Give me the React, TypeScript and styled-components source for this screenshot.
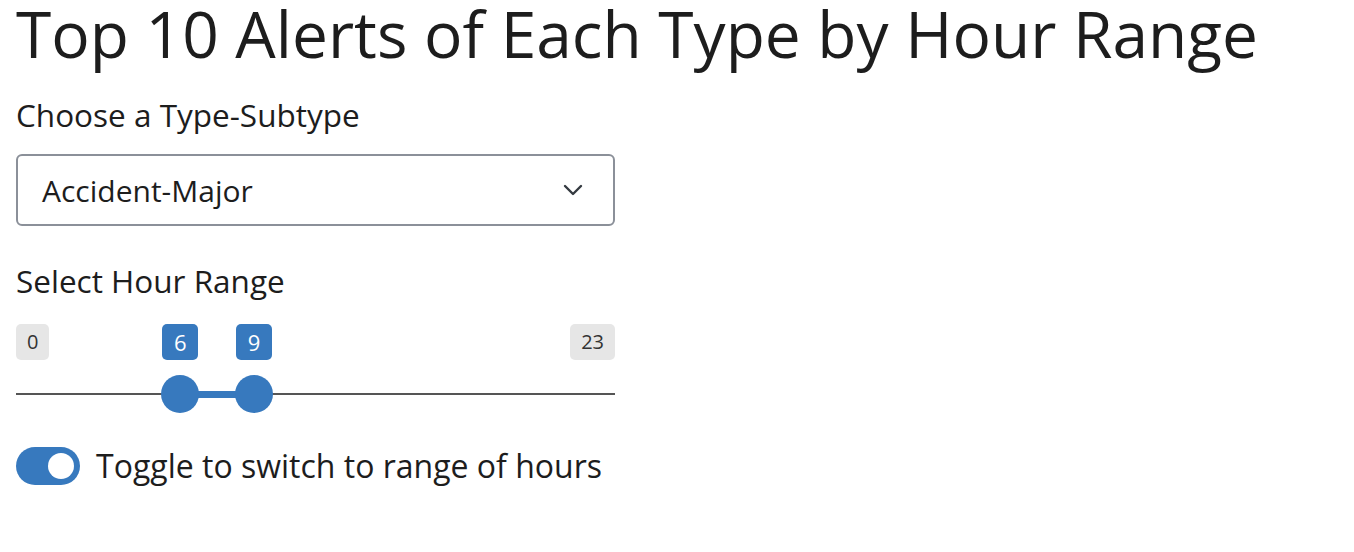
import { createGlobalStyle } from 'styled-components'
import styled from 'styled-components'

const MIN = 0
const MAX = 23
const FROM = 6
const TO = 9
// handle centres run from HANDLE_INSET to width - HANDLE_INSET
const HANDLE_INSET = 17

function pos(v: number) {
	const f = (v - MIN) / (MAX - MIN)
	return `calc(${HANDLE_INSET}px + (100% - ${HANDLE_INSET * 2}px) * ${f})`
}

function App() {
	return (
		<Page>
			<GlobalStyle />
			<Title>Top 10 Alerts of Each Type by Hour Range</Title>
			<Form>
				<Field $top={28}>
					<Label>Choose a Type-Subtype</Label>
					<Select>
						<span>Accident-Major</span>
						<svg width="20" height="12" viewBox="0 0 20 12">
							<path
								d="M2 2l8 8 8-8"
								fill="none"
								stroke="#343a40"
								strokeWidth="2.4"
								strokeLinecap="round"
								strokeLinejoin="round"
							/>
						</svg>
					</Select>
				</Field>
				<Field $top={36}>
					<Label>Select Hour Range</Label>
					<Slider>
						<TagRow>
							<EdgeTag>{MIN}</EdgeTag>
							<ValueTag style={{ left: pos(FROM) }}>{FROM}</ValueTag>
							<ValueTag style={{ left: pos(TO) }}>{TO}</ValueTag>
							<EdgeTag>{MAX}</EdgeTag>
						</TagRow>
						<TrackArea>
							<Line />
							<Bar style={{ left: pos(FROM), right: `calc(100% - ${pos(TO)})` }} />
							<Handle style={{ left: pos(FROM) }} />
							<Handle style={{ left: pos(TO) }} />
						</TrackArea>
					</Slider>
				</Field>
				<ToggleRow>
					<Switch $on>
						<Knob />
					</Switch>
					<ToggleText>Toggle to switch to range of hours</ToggleText>
				</ToggleRow>
			</Form>
		</Page>
	)
}

const blue = '#3779be'

const GlobalStyle = createGlobalStyle`
	body {
		margin: 0;
		background: #fff;
		color: #1d1d1d;
		font-family: 'Open Sans', 'Noto Sans', sans-serif;
	}
`
const Page = styled.div`
	padding: 0 16px;
`
const Title = styled.h1`
	margin: 0;
	font-size: 64px;
	font-weight: 400;
	line-height: 68px;
	white-space: nowrap;
`
const Form = styled.div`
	width: 599px;
	display: flex;
	flex-direction: column;
`
const Field = styled.div<{ $top: number }>`
	display: flex;
	flex-direction: column;
	gap: 20px;
	margin-top: ${(p) => p.$top}px;
`
const Label = styled.div`
	font-size: 31.5px;
	line-height: 38px;
	white-space: nowrap;
`
const Select = styled.div`
	box-sizing: border-box;
	height: 72px;
	border: 2px solid #8b9099;
	border-radius: 6px;
	display: flex;
	align-items: center;
	justify-content: space-between;
	padding: 0 30px 0 24px;
	font-size: 30px;
	svg {
		display: block;
	}
`
const Slider = styled.div`
	display: flex;
	flex-direction: column;
	gap: 15px;
	margin-top: 4px;
`
const TagRow = styled.div`
	position: relative;
	height: 36px;
	display: flex;
	justify-content: space-between;
`
const Tag = styled.div`
	height: 36px;
	border-radius: 5px;
	font-size: 20px;
	line-height: 36px;
	box-sizing: border-box;
	text-align: center;
`
const EdgeTag = styled(Tag)`
	padding: 0 11px;
	background: #e6e6e6;
	color: #333;
`
const ValueTag = styled(Tag)`
	position: absolute;
	top: 0;
	width: 36px;
	transform: translateX(-50%);
	background: ${blue};
	color: #fff;
	font-size: 22px;
`
const TrackArea = styled.div`
	position: relative;
	height: 38px;
	display: flex;
	align-items: center;
`
const Line = styled.div`
	flex: 1;
	height: 2px;
	background: #555;
`
const Bar = styled.div`
	position: absolute;
	top: 50%;
	height: 7px;
	margin-top: -3px;
	background: ${blue};
`
const Handle = styled.div`
	position: absolute;
	top: 0;
	width: 38px;
	height: 38px;
	border-radius: 50%;
	background: ${blue};
	transform: translateX(-50%);
`
const ToggleRow = styled.div`
	display: flex;
	align-items: center;
	gap: 16px;
	margin-top: 33px;
`
const Switch = styled.div<{ $on?: boolean }>`
	width: 64px;
	height: 38px;
	border-radius: 19px;
	background: ${(p) => (p.$on ? blue : '#ccc')};
	display: flex;
	align-items: center;
	justify-content: ${(p) => (p.$on ? 'flex-end' : 'flex-start')};
	padding: 0 6px;
	box-sizing: border-box;
`
const Knob = styled.div`
	width: 26px;
	height: 26px;
	border-radius: 50%;
	background: #fff;
`
const ToggleText = styled.span`
	font-size: 32px;
	line-height: 40px;
	white-space: nowrap;
`

export default App
